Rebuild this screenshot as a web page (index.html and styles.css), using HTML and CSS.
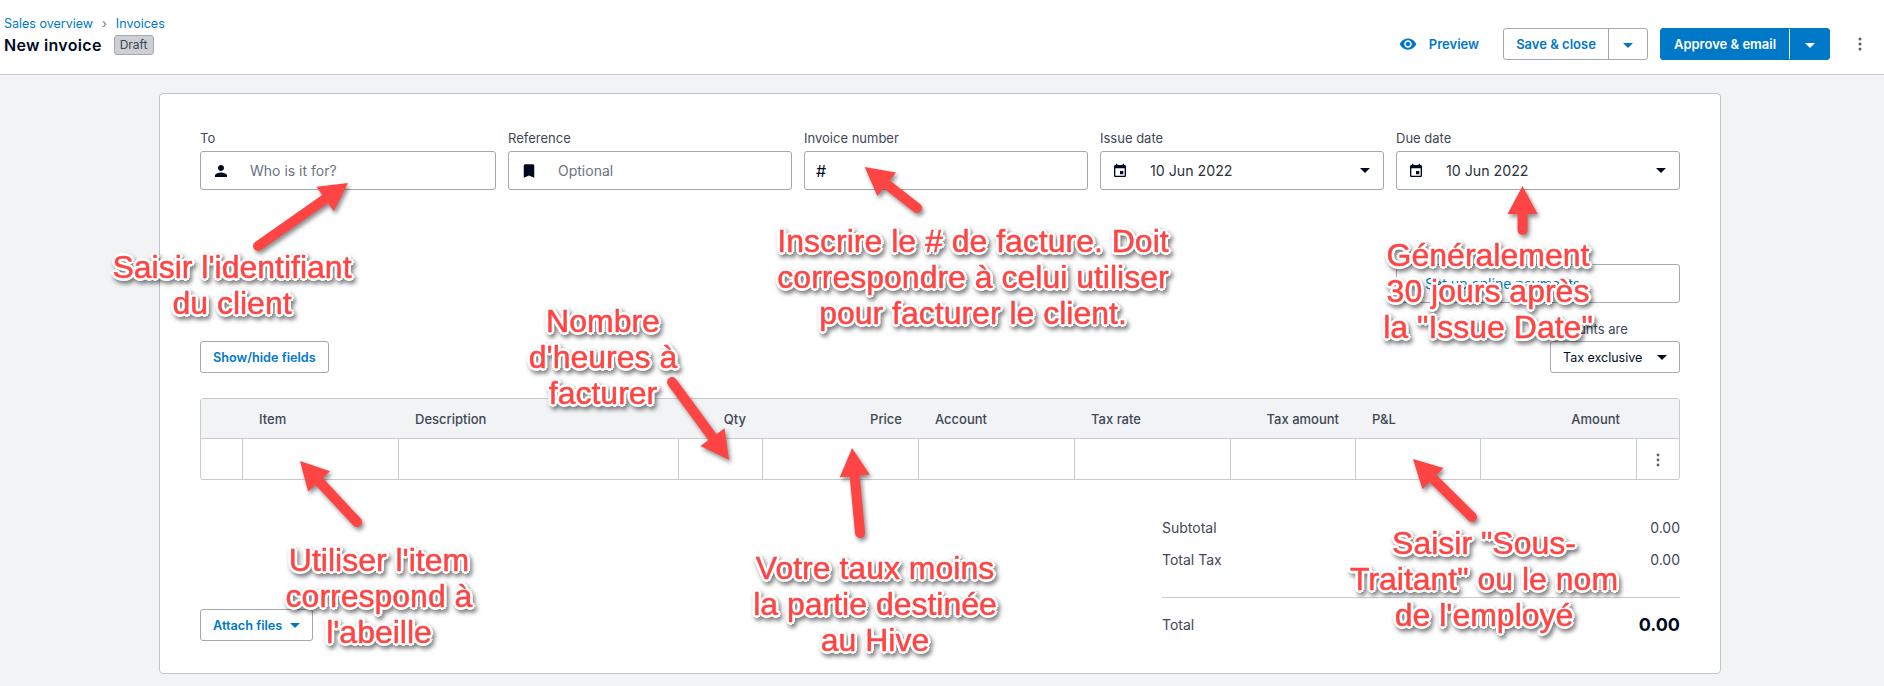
FILE: index.html
```html
<!DOCTYPE html>
<html lang="en">
<head>
  <meta charset="UTF-8">
  <title>New invoice</title>
  <link rel="stylesheet" href="styles.css">
</head>
<body>
  <header class="topbar">
    <div class="topbar-left">
      <nav class="crumbs">
        <a href="#">Sales overview</a>
        <span class="crumb-sep">›</span>
        <a href="#">Invoices</a>
      </nav>
      <div class="title-row">
        <h1>New invoice</h1>
        <span class="badge">Draft</span>
      </div>
    </div>
    <div class="topbar-right">
      <a class="preview" href="#">
        <svg width="18" height="18" viewBox="0 0 24 24"><path d="M12 4.5C7 4.5 2.73 7.61 1 12c1.73 4.39 6 7.5 11 7.5s9.27-3.11 11-7.5c-1.73-4.39-6-7.5-11-7.5zM12 17c-2.76 0-5-2.24-5-5s2.24-5 5-5 5 2.24 5 5-2.24 5-5 5zm0-8c-1.66 0-3 1.34-3 3s1.34 3 3 3 3-1.34 3-3-1.34-3-3-3z"/></svg>
        Preview
      </a>
      <div class="split">
        <button class="split-main">Save &amp; close</button>
        <button class="split-caret"><i class="caret"></i></button>
      </div>
      <div class="split split-blue">
        <button class="split-main">Approve &amp; email</button>
        <button class="split-caret"><i class="caret"></i></button>
      </div>
      <button class="more">
        <svg width="4" height="14" viewBox="0 0 4 14"><circle cx="2" cy="2" r="1.5"/><circle cx="2" cy="7" r="1.5"/><circle cx="2" cy="12" r="1.5"/></svg>
      </button>
    </div>
  </header>

  <main class="page">
    <section class="card">
      <div class="fields">
        <div class="field field-wide">
          <label>To</label>
          <div class="input">
            <svg class="ico" width="18" height="18" viewBox="0 0 24 24"><path d="M12 12c2.21 0 4-1.79 4-4s-1.79-4-4-4-4 1.79-4 4 1.79 4 4 4zm0 2c-2.67 0-8 1.34-8 4v2h16v-2c0-2.66-5.33-4-8-4z"/></svg>
            <span class="placeholder">Who is it for?</span>
          </div>
        </div>
        <div class="field">
          <label>Reference</label>
          <div class="input">
            <svg class="ico" width="18" height="18" viewBox="0 0 24 24"><path d="M17 3H7c-1.1 0-2 .9-2 2v16l7-3 7 3V5c0-1.1-.9-2-2-2z"/></svg>
            <span class="placeholder">Optional</span>
          </div>
        </div>
        <div class="field">
          <label>Invoice number</label>
          <div class="input"><span class="hash">#</span></div>
        </div>
        <div class="field">
          <label>Issue date</label>
          <div class="input">
            <svg class="ico ico-cal" width="16" height="16" viewBox="0 0 24 24"><path d="M17 12h-5v5h5v-5zM16 1v2H8V1H6v2H5c-1.11 0-1.99.9-1.99 2L3 19c0 1.1.89 2 2 2h14c1.1 0 2-.9 2-2V5c0-1.1-.9-2-2-2h-1V1h-2zm3 18H5V8h14v11z"/></svg>
            <span class="value">10 Jun 2022</span>
            <i class="caret caret-dark"></i>
          </div>
        </div>
        <div class="field">
          <label>Due date</label>
          <div class="input">
            <svg class="ico ico-cal" width="16" height="16" viewBox="0 0 24 24"><path d="M17 12h-5v5h5v-5zM16 1v2H8V1H6v2H5c-1.11 0-1.99.9-1.99 2L3 19c0 1.1.89 2 2 2h14c1.1 0 2-.9 2-2V5c0-1.1-.9-2-2-2h-1V1h-2zm3 18H5V8h14v11z"/></svg>
            <span class="value">10 Jun 2022</span>
            <i class="caret caret-dark"></i>
          </div>
        </div>
      </div>

      <div class="online-row">
        <div class="input online"><a href="#">Set up online payments</a></div>
      </div>

      <div class="table-tools">
        <button class="btn">Show/hide fields</button>
        <div class="amounts">
          <label>Amounts are</label>
          <div class="select">Tax exclusive <i class="caret caret-dark"></i></div>
        </div>
      </div>

      <table class="lines">
        <colgroup>
          <col class="c-42"><col class="c-156"><col class="c-280"><col class="c-84"><col class="c-156"><col class="c-156"><col class="c-156"><col class="c-125"><col class="c-125"><col class="c-156"><col class="c-42">
        </colgroup>
        <thead>
          <tr>
            <th></th>
            <th>Item</th>
            <th>Description</th>
            <th class="num">Qty</th>
            <th class="num">Price</th>
            <th>Account</th>
            <th>Tax rate</th>
            <th class="num">Tax amount</th>
            <th>P&amp;L</th>
            <th class="num">Amount</th>
            <th></th>
          </tr>
        </thead>
        <tbody>
          <tr>
            <td></td><td></td><td></td><td></td><td></td><td></td><td></td><td></td><td></td><td></td>
            <td class="row-menu">
              <svg width="4" height="14" viewBox="0 0 4 14"><circle cx="2" cy="2" r="1.4"/><circle cx="2" cy="7" r="1.4"/><circle cx="2" cy="12" r="1.4"/></svg>
            </td>
          </tr>
        </tbody>
      </table>

      <div class="card-foot">
        <button class="btn btn-attach">Attach files <i class="caret"></i></button>
        <div class="totals">
          <div class="total-row"><span>Subtotal</span><span>0.00</span></div>
          <div class="total-row"><span>Total Tax</span><span>0.00</span></div>
          <div class="total-row grand"><span>Total</span><strong>0.00</strong></div>
        </div>
      </div>
    </section>
  </main>

  <!-- annotations drawn on top of the screenshot -->
  <svg class="arrows" width="1884" height="686" viewBox="0 0 1884 686">
    <defs>
      <marker id="head" markerUnits="userSpaceOnUse" markerWidth="32" markerHeight="32" viewBox="0 0 32 32" refX="10" refY="16" orient="auto">
        <path d="M4 1 32 16 4 31z"/>
      </marker>
    </defs>
    <line x1="258" y1="246" x2="330" y2="195.6"/>
    <line x1="917" y1="208" x2="882" y2="180.6"/>
    <line x1="1522.5" y1="230" x2="1522.5" y2="208"/>
    <line x1="672" y1="382" x2="716" y2="442"/>
    <line x1="860" y1="533" x2="854.1" y2="470"/>
    <line x1="357" y1="522" x2="315" y2="477"/>
    <line x1="1472" y1="517" x2="1428.7" y2="474.4"/>
  </svg>
  <p class="note note-client">Saisir l'identifiant<br>du client</p>
  <p class="note note-number">Inscrire le # de facture. Doit<br>correspondre à celui utiliser<br>pour facturer le client.</p>
  <p class="note note-hours">Nombre<br>d'heures à<br>facturer</p>
  <p class="note note-date">Généralement<br>30 jours après<br>la "Issue Date"</p>
  <p class="note note-item">Utiliser l'item<br>correspond à<br>l'abeille</p>
  <p class="note note-rate">Votre taux moins<br>la partie destinée<br>au Hive</p>
  <p class="note note-pl">Saisir "Sous-<br>Traitant" ou le nom<br>de l'employé</p>
</body>
</html>
```

FILE: styles.css
```css
* {
  box-sizing: border-box;
}
html, body {
  margin: 0;
  height: 686px;
  overflow: hidden;
}
body {
  position: relative;
  font-family: Inter, "Noto Sans", sans-serif;
  font-size: 13px;
  color: #000a1e;
  background: #f2f3f5;
}
a {
  color: #0078c8;
  text-decoration: none;
}
button {
  font-family: inherit;
  cursor: pointer;
}

/* top bar */
.topbar {
  display: flex;
  justify-content: space-between;
  align-items: flex-start;
  height: 75px;
  padding: 15px 8px 0 4px;
  background: #fff;
  border-bottom: 1px solid #c8cacf;
}
.crumbs {
  display: flex;
  align-items: center;
  height: 16px;
  font-size: 12.5px;
}
.crumb-sep {
  margin: 0 9px;
  color: #6b7280;
}
.title-row {
  display: flex;
  align-items: center;
  gap: 12px;
  margin-top: 4px;
}
h1 {
  margin: 0;
  font-size: 16px;
  font-weight: 600;
  line-height: 20px;
  letter-spacing: 0.3px;
}
.badge {
  padding: 0 5px;
  height: 20px;
  line-height: 18px;
  font-size: 12px;
  color: #404756;
  background: #cdcfd4;
  border: 1px solid #a3a8b2;
  border-radius: 3px;
}
.topbar-right {
  display: flex;
  align-items: center;
  margin-top: 13px;
}
.preview {
  display: flex;
  align-items: center;
  gap: 12px;
  margin-right: 24px;
  font-size: 13px;
  font-weight: 600;
}
.preview svg {
  fill: #0078c8;
}
.split {
  display: flex;
  height: 32px;
  border: 1px solid #a3a8b2;
  border-radius: 3px;
  background: #fff;
  margin-right: 12px;
}
.split button {
  border: 0;
  background: none;
  color: #0078c8;
  font-size: 13px;
  font-weight: 600;
}
.split-main {
  width: 104px;
  padding: 0;
}
.split-caret {
  width: 39px;
  border-left: 1px solid #a3a8b2 !important;
}
.caret {
  display: inline-block;
  width: 0;
  height: 0;
  border-left: 5px solid transparent;
  border-right: 5px solid transparent;
  border-top: 5px solid currentColor;
  vertical-align: middle;
}
.split-blue {
  background: #0078c8;
  border-color: #0078c8;
}
.split-blue button {
  color: #fff;
}
.split-blue .split-main {
  width: 128px;
}
.split-blue .split-caret {
  width: 40px;
  border-left: 1px solid #fff !important;
}
.more {
  display: flex;
  padding: 0;
  margin-left: 2px;
  width: 32px;
  justify-content: center;
  border: 0;
  background: none;
}
.more svg {
  fill: #59606e;
}

/* invoice card */
.page {
  padding: 18px 163px 0 159px;
}
.card {
  height: 581px;
  padding: 36px 40px 0;
  background: #fff;
  border: 1px solid #c1c4ca;
  border-radius: 4px;
}
.fields {
  display: flex;
  gap: 12px;
}
.field {
  width: 284px;
}
.field-wide {
  width: 296px;
}
label {
  display: block;
  height: 16px;
  margin-bottom: 5px;
  font-size: 13px;
  line-height: 16px;
  color: #404756;
}
.input {
  display: flex;
  align-items: center;
  height: 39px;
  padding-left: 11px;
  border: 1px solid #a3a8b2;
  border-radius: 3px;
  background: #fff;
  font-size: 14px;
}
.ico {
  flex: none;
  fill: #000a1e;
}
.ico-cal {
  margin-right: 2px;
}
.placeholder {
  margin-left: 20px;
  color: #6b7280;
}
.value {
  flex: 1;
  margin-left: 20px;
  font-size: 14.2px;
  color: #2a3140;
}
.hash {
  font-size: 16px;
}
.caret-dark {
  color: #000a1e;
  margin-right: 13px;
}
.online-row {
  display: flex;
  justify-content: flex-end;
  margin-top: 74px;
}
.online {
  width: 284px;
  padding-left: 28px;
  font-size: 14px;
}
.table-tools {
  display: flex;
  justify-content: space-between;
  align-items: flex-end;
  margin-top: 18px;
}
.amounts label {
  margin-bottom: 4px;
}
.btn {
  height: 32px;
  padding: 0 12px;
  background: #fff;
  border: 1px solid #a3a8b2;
  border-radius: 3px;
  color: #0078c8;
  font-size: 12.7px;
  font-weight: 600;
}
.amounts {
  width: 130px;
}
.select {
  display: flex;
  justify-content: space-between;
  align-items: center;
  height: 32px;
  padding-left: 12px;
  border: 1px solid #a3a8b2;
  border-radius: 3px;
  font-size: 12.5px;
}
.select .caret-dark {
  margin-right: 12px;
}

/* line items */
.lines {
  width: 1480px;
  margin-top: 25px;
  table-layout: fixed;
  border-collapse: separate;
  border-spacing: 0;
  border: 1px solid #c8cacf;
  border-radius: 3px;
}
.c-42 { width: 42px; }
.c-84 { width: 84px; }
.c-125 { width: 125px; }
.c-156 { width: 156px; }
.c-280 { width: 280px; }
.lines th {
  height: 40px;
  padding: 0 16px;
  background: #f2f3f5;
  border-bottom: 1px solid #c8cacf;
  font-size: 13px;
  font-weight: 500;
  text-align: left;
  color: #404756;
}
.lines th.num {
  padding-right: 17px;
  text-align: right;
}
.lines td {
  height: 40px;
  padding: 0;
  border-right: 1px solid #c8cacf;
}
.lines td:last-child {
  border-right: 0;
}
.row-menu {
  text-align: center;
}
.row-menu svg {
  fill: #59606e;
  vertical-align: middle;
}

/* totals */
.card-foot {
  display: flex;
  justify-content: space-between;
  align-items: flex-end;
  margin-top: 31px;
}
.btn-attach {
  display: flex;
  align-items: center;
  gap: 8px;
}
.totals {
  width: 518px;
}
.total-row {
  display: flex;
  justify-content: space-between;
  align-items: center;
  height: 32px;
  font-size: 14px;
  color: #404756;
}
.total-row.grand {
  height: 44px;
  margin-top: 22px;
  padding-top: 10px;
  border-top: 1px solid #c8cacf;
}
.grand strong {
  font-size: 18px;
  color: #000a1e;
}

/* red annotations over the page */
.arrows {
  position: absolute;
  left: 0;
  top: 0;
  filter: drop-shadow(2px 3px 2px rgba(0, 0, 0, 0.45));
}
.arrows line {
  stroke: #ff4444;
  stroke-width: 10;
  stroke-linecap: round;
  marker-end: url(#head);
}
.arrows path {
  fill: #ff4444;
}
.note {
  position: absolute;
  margin: 0;
  font-family: "Liberation Sans", Arial, sans-serif;
  font-size: 32px;
  line-height: 36px;
  text-align: center;
  white-space: nowrap;
  color: #ff4444;
  -webkit-text-stroke: 0.5px #ff4444;
  text-shadow:
    3px 0 0 #fff, -3px 0 0 #fff, 0 3px 0 #fff, 0 -3px 0 #fff,
    2px 2px 0 #fff, -2px 2px 0 #fff, 2px -2px 0 #fff, -2px -2px 0 #fff;
  filter: drop-shadow(2px 3px 2px rgba(0, 0, 0, 0.5));
}
.note-client { left: 82px; top: 249px; width: 300px; }
.note-number { left: 763px; top: 223px; width: 420px; }
.note-hours { left: 503px; top: 303px; width: 200px; }
.note-date { left: 1358px; top: 237px; width: 260px; }
.note-item { left: 249px; top: 542px; width: 260px; }
.note-rate { left: 725px; top: 550px; width: 300px; }
.note-pl { left: 1324px; top: 525px; width: 320px; }
```
